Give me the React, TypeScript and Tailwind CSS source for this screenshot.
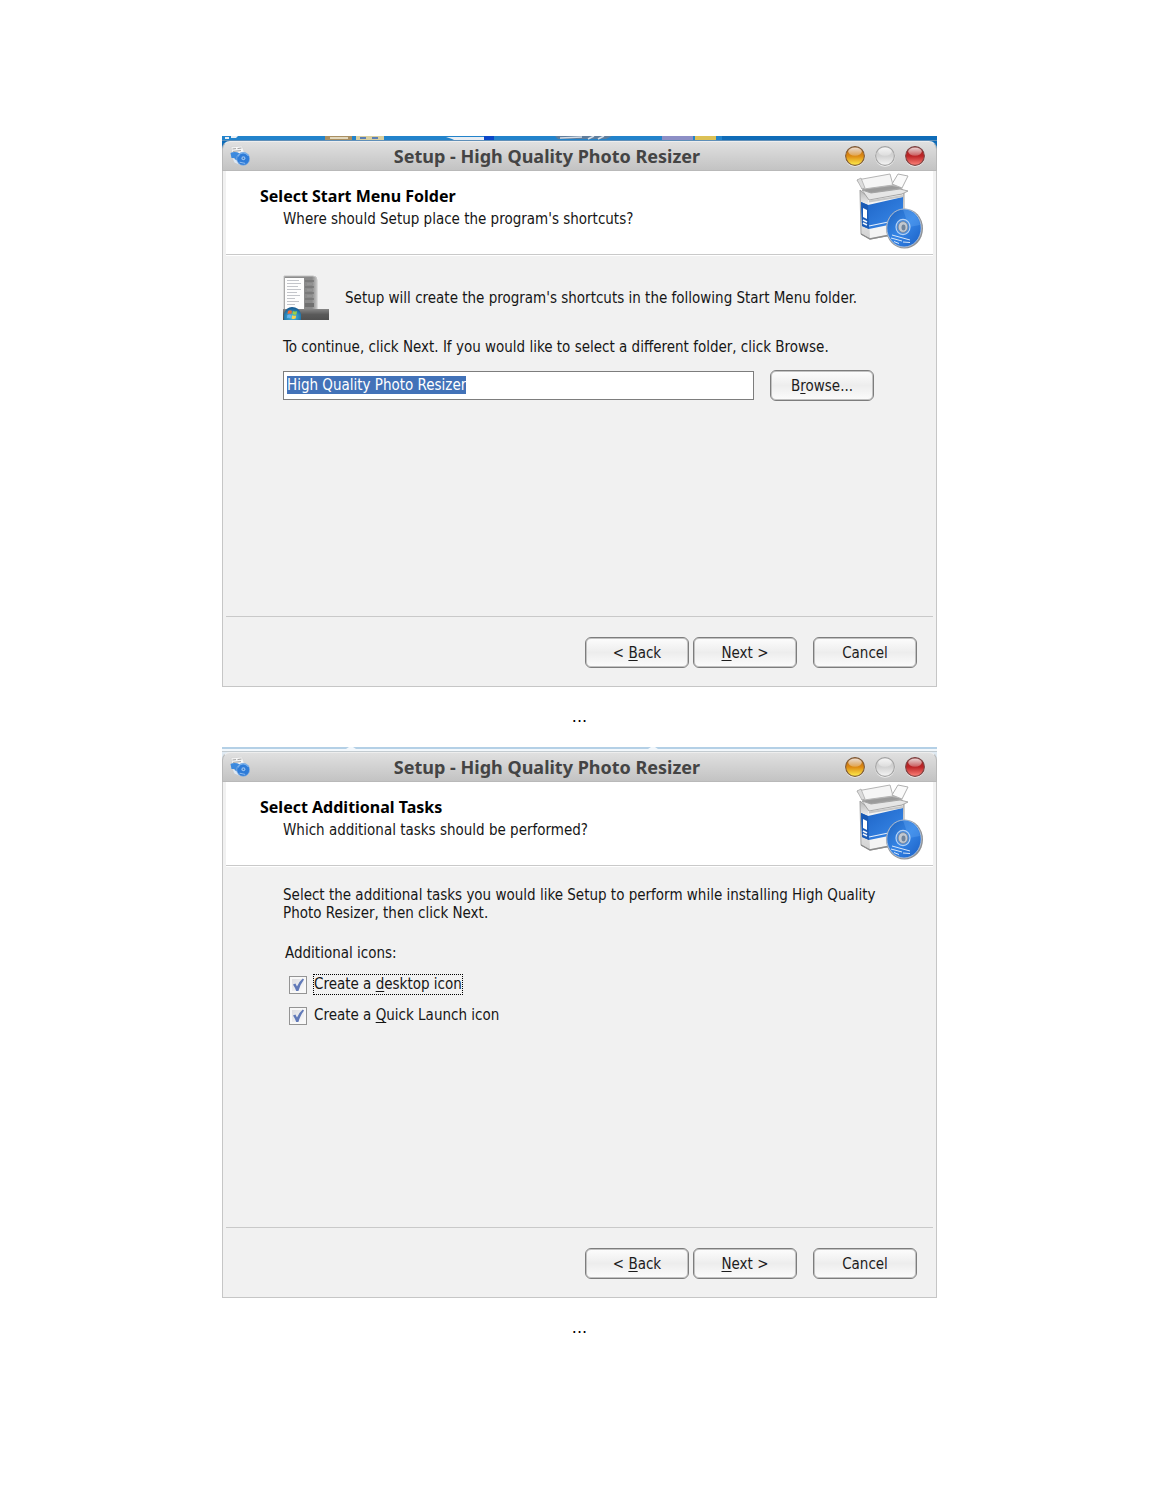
import { useEffect, useRef, useState } from 'react';
import type { ReactNode } from 'react';
import clsx from 'clsx';

function AppIcon() {
    return (
        <svg width="20" height="20" viewBox="0 0 20 20" className="shrink-0" aria-hidden="true">
            <path d="M1 1 L12 0 L15 8 L3 10 Z" fill="#f6f6f6" stroke="#cfcfcf" strokeWidth="0.6" />
            <path d="M2.5 3 L6 2.6 M7.5 2.6 L11.5 2 M3 5.4 L11 4.6" stroke="#8a8a8a" strokeWidth="0.8" />
            <path d="M0.5 7 Q5 5 10 7.5 L10.5 18 L5.5 15.5 L4.5 12 L1.5 12 Z" fill="#3d8ade" />
            <path d="M2.5 12 L4.5 16.5 L10.5 19 L9 15.5 Z" fill="#dfe9f4" />
            <circle cx="13.2" cy="12.8" r="6.5" fill="#2f7cd8" stroke="#8fb6e2" strokeWidth="0.7" />
            <path d="M8 10.4 A5.8 5.8 0 0 1 18.2 9.8" stroke="#79b2ee" strokeWidth="1.1" fill="none" />
            <circle cx="13.4" cy="12.2" r="2" fill="#8fbdf0" />
            <circle cx="13.4" cy="12.2" r="0.8" fill="#3a6fb0" />
            <path d="M9.6 16.2 L15.2 17.4" stroke="#a9cdf5" strokeWidth="0.8" />
        </svg>
    );
}

function BoxIcon() {
    return (
        <svg width="68" height="78" viewBox="0 0 68 78" className="shrink-0" aria-hidden="true">
            <defs>
                <linearGradient id="boxBlue" x1="0" y1="0" x2="1" y2="1">
                    <stop offset="0" stopColor="#1c62c4" />
                    <stop offset="1" stopColor="#3a8aea" />
                </linearGradient>
                <linearGradient id="boxSide" x1="0" y1="0" x2="0" y2="1">
                    <stop offset="0" stopColor="#b5b5b5" />
                    <stop offset="0.3" stopColor="#efefef" />
                    <stop offset="1" stopColor="#d2d2d2" />
                </linearGradient>
                <linearGradient id="boxInside" x1="0" y1="0" x2="0" y2="1">
                    <stop offset="0" stopColor="#c4c4c4" />
                    <stop offset="1" stopColor="#858585" />
                </linearGradient>
                <linearGradient id="disc" x1="0" y1="0" x2="1" y2="1">
                    <stop offset="0" stopColor="#1f63bd" />
                    <stop offset="0.5" stopColor="#3585e6" />
                    <stop offset="1" stopColor="#1a5fc4" />
                </linearGradient>
            </defs>
            <path d="M4 17 L13 25 L48 20 L48 60 L14 66 L5 61 Z" fill="url(#boxSide)" stroke="#a2a2a2" strokeWidth="1" />
            <path d="M12 25 L47 21 L47 59 L14 65 Z" fill="#f4f4f4" />
            <path d="M5 29 L12 32 L47 24 L47 49 L13 56 L6 53 Z" fill="url(#boxBlue)" />
            <path d="M5 29 L12 32 L13 56 L6 53 Z" fill="#1a5ab4" />
            <path d="M7 35 L11 37 L11 46 L7 44 Z" fill="#fff" />
            <path d="M7 47 L11 49 M7 50 L11 52" stroke="#f1f6fd" strokeWidth="1.6" />
            <path d="M13 53 L47 46" stroke="#e4eefb" strokeWidth="1.2" />
            <path d="M5 61 L14 66 L34 62" stroke="#8c8c8c" strokeWidth="1.4" fill="none" />
            {/* open flaps */}
            <path d="M5 15 L36 10 L47 16 L47 21 L14 25 Z" fill="url(#boxInside)" />
            <path d="M1 7 L34 1 L37 12 L8 16 Z" fill="#f5f5f5" stroke="#b4b4b4" strokeWidth="1" />
            <path d="M1 7 L5 5 L9 15 L6 16 Z" fill="#dcdcdc" stroke="#a6a6a6" strokeWidth="0.7" />
            <path d="M36 11 L42 1 L52 3 L46 15 Z" fill="#fafafa" stroke="#b0b0b0" strokeWidth="1" />
            <path d="M6 17 L36 13 L46 15 L15 19 Z" fill="#9a9a9a" />
            <path d="M6 17 L15 20 L44 16 L52 18 L46 21 L13 27 Z" fill="#e6e6e6" stroke="#a0a0a0" strokeWidth="0.9" />
            <path d="M13 28.5 L47 23" stroke="#b5b5b5" strokeWidth="2" opacity="0.7" />
            {/* disc */}
            <ellipse cx="48.5" cy="55.5" rx="18.5" ry="20" fill="#8f9296" />
            <ellipse cx="48" cy="55" rx="17.2" ry="19" fill="url(#disc)" stroke="#c7d6ea" strokeWidth="0.7" />
            <path d="M47 36.5 A17 19 0 0 1 64 52 L53 54 Z" fill="#66abf5" opacity="0.35" />
            <ellipse cx="47" cy="54" rx="7" ry="7.6" fill="#4a8cdc" stroke="#b5d2f4" strokeWidth="1.2" />
            <ellipse cx="47" cy="54" rx="4.8" ry="5.4" fill="#c3c9d0" stroke="#7c8898" strokeWidth="0.8" />
            <ellipse cx="47.5" cy="54.5" rx="2" ry="3" fill="#72859b" />
            <path d="M36 62 L54 67 M35 65 L46 68 M38 68.5 L43 70.5 M47 69 L54 69.5" stroke="#d6e6fa" strokeWidth="1" fill="none" />
        </svg>
    );
}

function StartMenuIcon() {
    return (
        <svg width="46" height="46" viewBox="0 0 46 46" className="shrink-0" aria-hidden="true">
            <defs>
                <linearGradient id="panel" x1="0" y1="0" x2="1" y2="0">
                    <stop offset="0" stopColor="#8e8e8e" />
                    <stop offset="0.85" stopColor="#8a8a8a" />
                    <stop offset="1" stopColor="#c6c6c6" />
                </linearGradient>
                <linearGradient id="taskbar" x1="0" y1="0" x2="0" y2="1">
                    <stop offset="0" stopColor="#868686" />
                    <stop offset="0.5" stopColor="#5a5a5a" />
                    <stop offset="1" stopColor="#505050" />
                </linearGradient>
                <radialGradient id="orb" cx="0.5" cy="0.75" r="0.7">
                    <stop offset="0" stopColor="#4fc3e8" />
                    <stop offset="1" stopColor="#155a92" />
                </radialGradient>
            </defs>
            <path d="M1 1 H30 Q34 1 34 5 V35 H1 Z" fill="url(#panel)" stroke="#c4c4c4" strokeWidth="1" />
            <rect x="2" y="3" width="19" height="31" fill="#fdfdfd" />
            <path d="M4 5.5 H16 M4 8.5 H18 M4 11.5 H15 M4 14.5 H18 M4 17.5 H14 M4 20.5 H17 M4 23.5 H12 M4 26.5 H16 M4 29.5 H12" stroke="#c3c5ca" strokeWidth="1" />
            <path d="M22 6 H31 M22 12 H31 M22 18 H31 M22 24 H31" stroke="#757575" strokeWidth="1.4" />
            <path d="M24 9 H29 M24 15 H29 M24 21 H29" stroke="#9c9c9c" strokeWidth="1" />
            <rect x="22" y="28" width="9" height="4" fill="#707070" />
            <rect x="0" y="34" width="46" height="11" fill="url(#taskbar)" />
            <path d="M1 45 V39 Q3 32 9 32 Q16 32 18 39 V45 Z" fill="url(#orb)" />
            <path d="M5 36 Q7 34.5 9 36 L8.4 39 Q6.5 38 4.5 39 Z" fill="#ef6a34" />
            <path d="M10 36 Q12 37 14 36 L13.4 39.4 Q11.5 40 9.4 39 Z" fill="#9ccf45" />
            <path d="M4.4 40 Q6.3 39 8.2 40 L7.6 43.2 Q5.8 42.3 4 43 Z" fill="#66b5ef" />
            <path d="M9.2 40.2 Q11.2 41.2 13.2 40.4 L12.6 43.6 Q10.6 44.4 8.6 43.4 Z" fill="#fcd24a" />
        </svg>
    );
}

// Slice of the desktop that shows above the first window
function WallpaperStrip() {
    return (
        <svg className="block h-[5px] w-full" viewBox="0 0 715 5" preserveAspectRatio="none" aria-hidden="true">
            <rect width="715" height="5" fill="#2283cb" />
            <rect x="500" width="215" height="5" fill="#0f6cb8" />
            <path d="M3 1 H7 V3 H3 Z M9 0 H16 L14 2 H9 Z" fill="#e8eef4" />
            <rect x="103" width="27" height="4" fill="#a98f62" />
            <path d="M108 2 H126" stroke="#e3d8bd" strokeWidth="2" />
            <path d="M134 0 H162 V4 H134 Z" fill="#d9cfa0" />
            <path d="M138 2 H144 M150 2 H156" stroke="#5a7fb5" strokeWidth="2" />
            <path d="M230 3 L224 1 H262 V4 H232 Z" fill="#e9edf2" />
            <rect x="262" width="10" height="4" fill="#0b46c8" />
            <path d="M333 0 H390 L384 3 H336 Z" fill="#5f7d9c" />
            <path d="M338 2 L360 1 M366 3 L372 0 M376 3 L382 0" stroke="#d5dde6" strokeWidth="1.6" />
            <rect x="440" width="31" height="4" fill="#8d8fc6" />
            <rect x="473" width="21" height="4" fill="#dcc155" />
            <rect y="4" width="715" height="1" fill="#5f8fb8" />
        </svg>
    );
}

// Browser tab bottoms behind the second window
function TabStrip() {
    return (
        <svg className="block h-[5px] w-full" viewBox="0 0 715 5" preserveAspectRatio="none" aria-hidden="true">
            <rect width="715" height="5" fill="#f3f8fc" />
            <path d="M0 0 H127 L124 2 H0 Z M131 0 H429 L426 2 H134 Z M433 0 H715 V2 H436 Z" fill="#b4d0e6" />
            <rect y="4" width="715" height="1" fill="#c3cbd0" />
        </svg>
    );
}

const orbs = {
    minimize: { label: 'Minimize', top: '#a85f1c', mid: '#dd8a12', low: '#fff04f', ring: '#7c5a3a' },
    maximize: { label: 'Maximize', top: '#cccccc', mid: '#d2d2d2', low: '#f6f6f6', ring: '#a3a3a3' },
    close: { label: 'Close', top: '#9a2a2a', mid: '#bd2426', low: '#ff857c', ring: '#7a4444' },
};

function WindowOrb({ kind, id }: { kind: keyof typeof orbs; id: string }) {
    const orb = orbs[kind];
    return (
        <button type="button" aria-label={orb.label} className="block size-[22px]">
            <svg width="22" height="22" viewBox="0 0 22 22" aria-hidden="true">
                <defs>
                    <linearGradient id={`${id}-${kind}`} x1="0" y1="0" x2="0" y2="1">
                        <stop offset="0" stopColor={orb.top} />
                        <stop offset="0.5" stopColor={orb.mid} />
                        <stop offset="1" stopColor={orb.low} />
                    </linearGradient>
                    <linearGradient id={`${id}-${kind}-gloss`} x1="0" y1="0" x2="0" y2="1">
                        <stop offset="0" stopColor="#fff" stopOpacity="0.8" />
                        <stop offset="1" stopColor="#fff" stopOpacity="0.25" />
                    </linearGradient>
                </defs>
                <circle cx="11" cy="11.6" r="10.2" fill="#f2f2f2" />
                <circle cx="11" cy="11" r="9.4" fill={`url(#${id}-${kind})`} stroke={orb.ring} strokeWidth="1.1" />
                <ellipse cx="11" cy="6.6" rx="6.8" ry="4.2" fill={`url(#${id}-${kind}-gloss)`} />
            </svg>
        </button>
    );
}

function WizardButton({ children, className }: { children: ReactNode; className?: string }) {
    return (
        <button
            type="button"
            className={clsx(
                'h-[31px] w-[104px] rounded-[6px] border border-[#7d7d7d] pt-px text-[15px] leading-[18px] text-[#1c1c1c]',
                'bg-linear-to-b from-[#fdfdfd] via-[#ededed] to-[#fcfcfc] shadow-[inset_0_0_0_1px_#c2c2c2]',
                className
            )}
        >
            {children}
        </button>
    );
}

function Key({ children }: { children: string }) {
    return <span className="underline decoration-1 underline-offset-2">{children}</span>;
}

interface WizardProps {
    id: string;
    heading: string;
    subheading: string;
    strip: ReactNode;
    backdrop: string;
    children: ReactNode;
}

function WizardWindow({ id, heading, subheading, strip, backdrop, children }: WizardProps) {
    return (
        <section aria-labelledby={`${id}-heading`} className="w-full">
            {strip}
            <div className={backdrop}>
                <header className="flex h-[30px] items-center rounded-t-[8px] border border-t-[#eeeeee] border-[#b9b9b9] bg-linear-to-b from-[#e0e0e0] to-[#c3c3c3] pr-[10px] pl-[7px]">
                    <AppIcon />
                    <h1 className="flex-1 text-center font-['Noto_Sans',sans-serif] text-[18px] leading-[24px] font-bold text-[#444444]">
                        Setup - High Quality Photo Resizer
                    </h1>
                    <div className="flex gap-2">
                        <WindowOrb kind="minimize" id={id} />
                        <WindowOrb kind="maximize" id={id} />
                        <WindowOrb kind="close" id={id} />
                    </div>
                </header>
            </div>

            <div className="border border-t-0 border-[#c6c6c6] bg-[#f1f1f1] px-[3px]">
                <div className="flex min-h-[84px] items-start justify-between border-b border-[#c9c9c9] bg-white pt-[2px] pr-[9px] pl-[34px]">
                    <div className="pt-3">
                        <h2 id={`${id}-heading`} className="font-['Noto_Sans',sans-serif] text-[16px] leading-[22px] font-bold text-black">
                            {heading}
                        </h2>
                        <p className="mt-[3px] pl-[23px]">{subheading}</p>
                    </div>
                    <BoxIcon />
                </div>

                <div className="min-h-[361px] border-t border-white pt-[19px] pl-[57px]">{children}</div>

                <footer className="flex justify-end border-t border-[#c9c9c9] pt-5 pr-4 pb-[18px]">
                    <WizardButton>&lt; <Key>B</Key>ack</WizardButton>
                    <WizardButton className="ml-1"><Key>N</Key>ext &gt;</WizardButton>
                    <WizardButton className="ml-4">Cancel</WizardButton>
                </footer>
            </div>
        </section>
    );
}

function TaskOption({ id, focused, children }: { id: string; focused?: boolean; children: ReactNode }) {
    const [checked, setChecked] = useState(true);
    return (
        <div className="flex h-[21px] items-center gap-[6px]">
            <span className="relative block size-[18px]">
                <input
                    id={id}
                    type="checkbox"
                    checked={checked}
                    onChange={e => setChecked(e.target.checked)}
                    className="block size-[18px] appearance-none border border-[#949494] bg-linear-to-br from-[#d8d8dc] to-white shadow-[inset_0_0_0_2px_#f8f8f8]"
                />
                {checked && (
                    <svg className="pointer-events-none absolute inset-0" width="18" height="18" viewBox="0 0 18 18" aria-hidden="true">
                        <path d="M4 8.4 L6.4 7.6 L8 10.4 Q10.2 5.6 13.8 2.6 L15 3.6 Q11.2 8.6 9.4 15 L7.2 15 Q6 11.4 4 8.4 Z" fill="#6079b8" />
                    </svg>
                )}
            </span>
            <label htmlFor={id} className={clsx('leading-[19px] border border-dotted', focused ? 'border-black' : 'border-transparent')}>
                {children}
            </label>
        </div>
    );
}

export default function App() {
    const folderRef = useRef<HTMLInputElement>(null);

    useEffect(() => {
        folderRef.current?.focus();
        folderRef.current?.select();
    }, []);

    return (
        <main className="min-h-screen bg-white font-['DejaVu_Sans_Condensed','DejaVu_Sans',sans-serif] text-[15px] leading-[18px] text-[#161616]">
            <div className="mx-auto flex max-w-[715px] flex-col items-center pt-[136px]">
                <WizardWindow
                    id="folder"
                    heading="Select Start Menu Folder"
                    subheading="Where should Setup place the program's shortcuts?"
                    strip={<WallpaperStrip />}
                    backdrop="bg-[#0f6cb8]"
                >
                    <div className="flex items-center gap-4">
                        <StartMenuIcon />
                        <p>Setup will create the program's shortcuts in the following Start Menu folder.</p>
                    </div>
                    <label htmlFor="folder-name" className="mt-[17px] block">
                        To continue, click Next. If you would like to select a different folder, click Browse.
                    </label>
                    <div className="mt-[14px] flex items-center gap-4 pr-[59px]">
                        <input
                            id="folder-name"
                            ref={folderRef}
                            type="text"
                            defaultValue="High Quality Photo Resizer"
                            className="h-[29px] min-w-0 flex-1 border border-[#7d7d7d] bg-white px-[3px] pb-px outline-none selection:bg-[#4272b8] selection:text-white"
                        />
                        <WizardButton>B<Key>r</Key>owse...</WizardButton>
                    </div>
                </WizardWindow>

                <p className="py-[21px] font-['DejaVu_Sans',sans-serif] text-[16px] text-black">...</p>

                <WizardWindow
                    id="tasks"
                    heading="Select Additional Tasks"
                    subheading="Which additional tasks should be performed?"
                    strip={<TabStrip />}
                    backdrop="bg-[#dfeaf3]"
                >
                    <p className="pr-[50px]">
                        Select the additional tasks you would like Setup to perform while installing High Quality Photo Resizer, then click Next.
                    </p>
                    <p className="mt-[22px] pl-[2px]">Additional icons:</p>
                    <div className="mt-3 flex flex-col gap-[10px] pl-[6px]">
                        <TaskOption id="desktop-icon" focused>Create a <Key>d</Key>esktop icon</TaskOption>
                        <TaskOption id="quick-launch">Create a <Key>Q</Key>uick Launch icon</TaskOption>
                    </div>
                </WizardWindow>

                <p className="py-[21px] font-['DejaVu_Sans',sans-serif] text-[16px] text-black">...</p>
            </div>
        </main>
    );
}
